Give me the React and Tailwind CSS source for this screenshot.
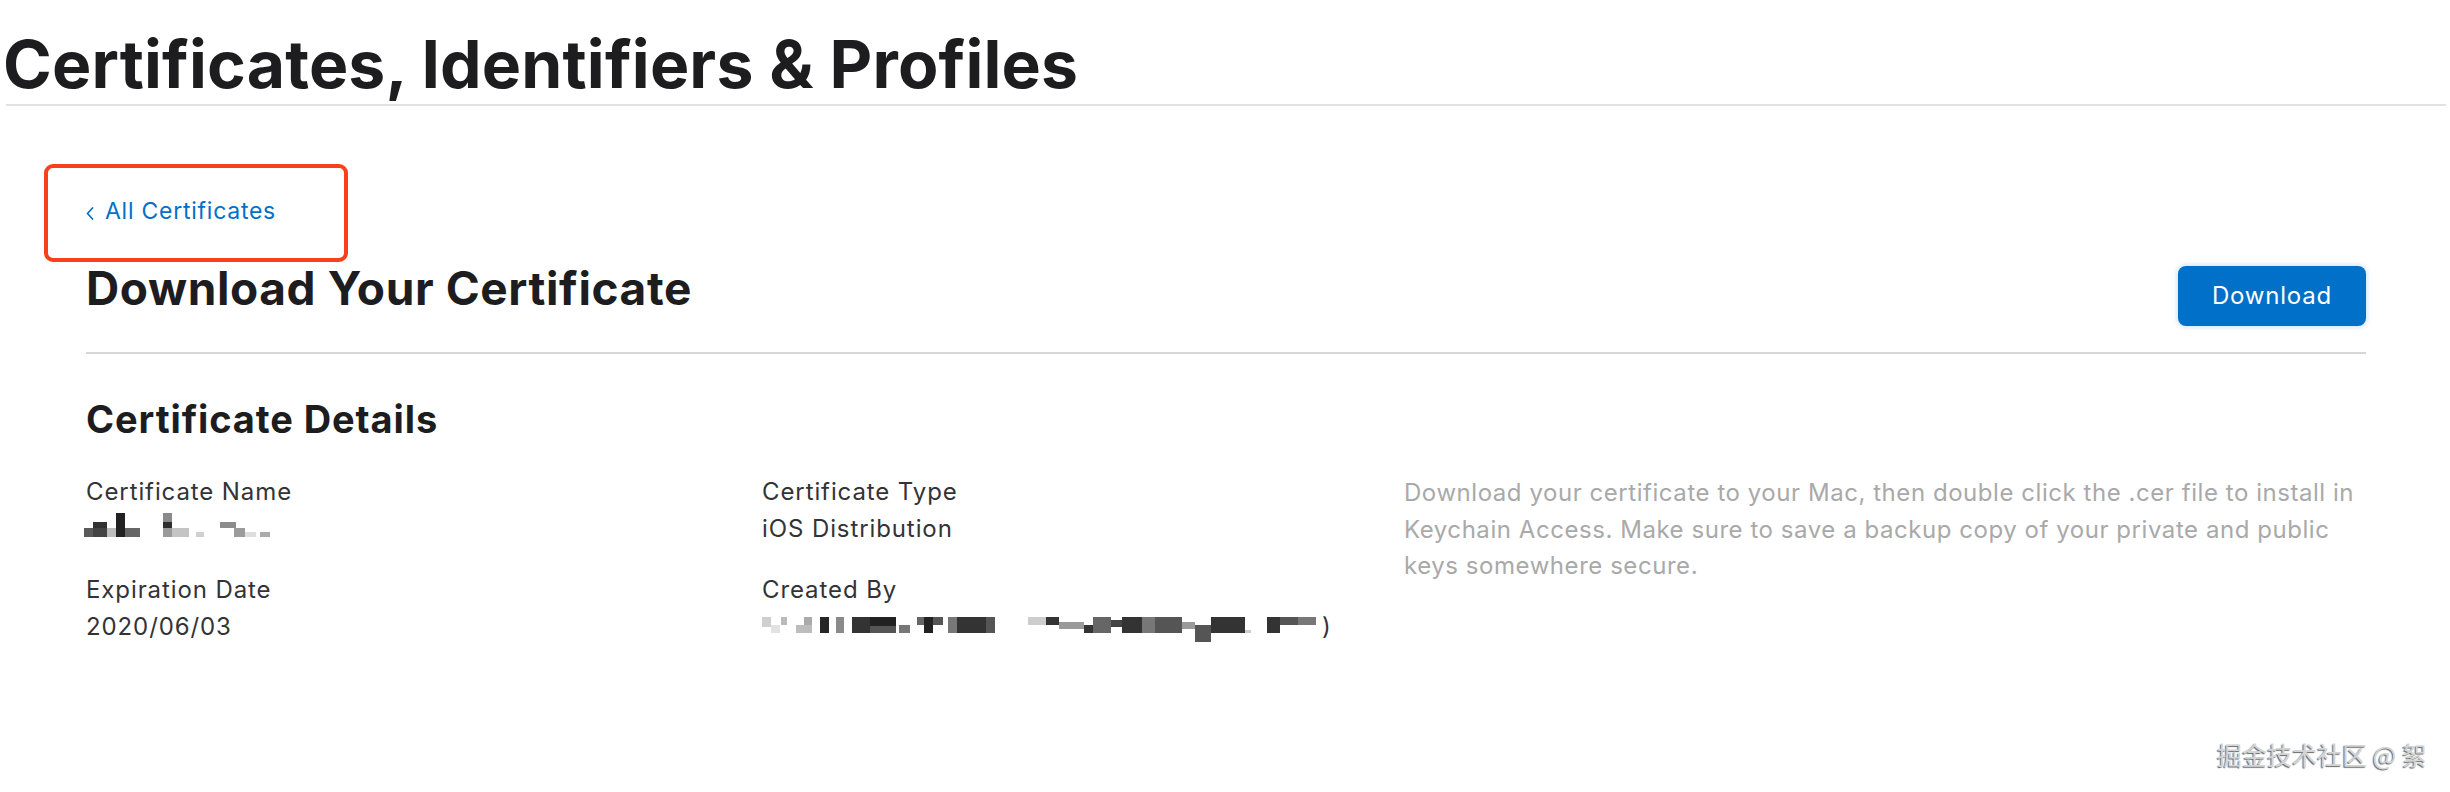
import React from "react";

const nameCells = [
  [0, 15, 9, 9, "#5a5a5a"],
  [9, 9, 14, 6, "#333"],
  [9, 15, 14, 9, "#444"],
  [23, 15, 9, 9, "#bdbdbd"],
  [32, 0, 9, 24, "#222"],
  [41, 15, 15, 9, "#666"],
  [79, 0, 9, 9, "#8a8a8a"],
  [79, 9, 9, 6, "#2e2e2e"],
  [79, 15, 9, 9, "#9a9a9a"],
  [88, 15, 17, 9, "#c4c4c4"],
  [112, 19, 8, 5, "#d0d0d0"],
  [136, 9, 16, 6, "#8c8c8c"],
  [150, 15, 11, 9, "#9c9c9c"],
  [161, 19, 11, 5, "#dedede"],
  [176, 19, 10, 5, "#ababab"],
];

const createdCells = [
  [0, 0, 9, 10, "#cfcfcf"],
  [9, 8, 9, 8, "#e2e2e2"],
  [19, 0, 6, 8, "#bbb"],
  [34, 8, 16, 8, "#bdbdbd"],
  [42, 0, 8, 8, "#aaa"],
  [58, 0, 9, 16, "#262626"],
  [74, 0, 8, 16, "#8a8a8a"],
  [90, 0, 18, 16, "#333"],
  [108, 0, 26, 9, "#222"],
  [108, 9, 26, 7, "#555"],
  [137, 8, 11, 8, "#777"],
  [155, 0, 7, 8, "#666"],
  [162, 0, 9, 16, "#222"],
  [171, 0, 10, 8, "#555"],
  [186, 0, 9, 16, "#777"],
  [195, 0, 29, 16, "#333"],
  [224, 0, 9, 16, "#555"],
  [266, 0, 18, 8, "#cdcdcd"],
  [284, 0, 13, 8, "#333"],
  [297, 5, 25, 7, "#9a9a9a"],
  [322, 8, 9, 8, "#333"],
  [331, 0, 18, 16, "#666"],
  [349, 3, 11, 7, "#444"],
  [360, 0, 20, 16, "#333"],
  [380, 0, 13, 16, "#777"],
  [393, 0, 27, 16, "#555"],
  [420, 5, 13, 7, "#9a9a9a"],
  [433, 8, 16, 17, "#555"],
  [449, 0, 34, 16, "#333"],
  [483, 13, 6, 3, "#ccc"],
  [505, 0, 13, 16, "#333"],
  [518, 0, 18, 8, "#555"],
  [536, 0, 18, 8, "#777"],
];

function Mosaic({ cells, w, h }) {
  return (
    <svg width={w} height={h} viewBox={`0 0 ${w} ${h}`} className="block">
      {cells.map(([x, y, cw, ch, c], i) => (
        <rect key={i} x={x} y={y} width={cw} height={ch} fill={c} />
      ))}
    </svg>
  );
}

export default function App() {
  return (
    <div className="relative w-[2450px] h-[792px] overflow-hidden bg-white [font-family:Inter,sans-serif] text-[#333336]">
      <header>
        <h1 className="pt-[31px] pl-[3px] text-[66px] leading-[66px] font-bold text-[#1d1d1f] tracking-[0.15px] whitespace-nowrap">
          Certificates, Identifiers &amp; Profiles
        </h1>
        <div className="mt-[7px] ml-[6px] mr-[4px] h-[2px] bg-[#e2e2e2]" />
      </header>

      <main className="ml-[86px] w-[2280px]">
        <a className="mt-[91px] flex h-[28px] items-center text-[#0070c9] text-[23px] leading-[28px] tracking-[0.75px]">
          <svg width="8" height="13" viewBox="0 0 8 13" className="mt-[4px] shrink-0">
            <polyline points="6.5,1 1.5,6.5 6.5,12" fill="none" stroke="#0070c9" strokeWidth="1.7" strokeLinecap="round" strokeLinejoin="round" />
          </svg>
          <span className="ml-[11px]">All Certificates</span>
        </a>

        <div className="mt-[41px] flex items-start justify-between">
          <h2 className="-mt-[1px] text-[46px] leading-[46px] font-bold text-[#1d1d1f] tracking-[0.6px] whitespace-nowrap">
            Download Your Certificate
          </h2>
          <button className="flex h-[60px] w-[188px] items-center justify-center rounded-[8px] bg-[#0070c9] text-[24px] tracking-[0.8px] text-white shadow-[0_0_6px_rgba(0,112,201,0.28)]">
            Download
          </button>
        </div>

        <div className="mt-[26px] h-[2px] bg-[#d6d6d6]" />

        <h3 className="mt-[46px] text-[38px] leading-[38px] font-bold text-[#1d1d1f] tracking-[0.9px]">
          Certificate Details
        </h3>

        <div className="mt-[35px] grid grid-cols-[676px_642px_1fr] text-[24px] leading-[37px]">
          <div className="tracking-[0.9px]">
            <div>Certificate Name</div>
            <div className="flex h-[37px] items-start pt-[3px] -ml-[2px]">
              <Mosaic cells={nameCells} w={190} h={24} />
            </div>
            <div className="mt-[24px]">Expiration Date</div>
            <div>2020/06/03</div>
          </div>
          <div className="tracking-[0.9px]">
            <div>Certificate Type</div>
            <div>iOS Distribution</div>
            <div className="mt-[24px]">Created By</div>
            <div className="flex h-[37px] items-start">
              <div className="pt-[9px]">
                <Mosaic cells={createdCells} w={556} h={25} />
              </div>
              <span className="ml-[4px]">)</span>
            </div>
          </div>
          <p className="mt-[2px] leading-[36.5px] tracking-[0.55px] text-[#a9a9a9] whitespace-nowrap">
            Download your certificate to your Mac, then double click the .cer file to install in
            <br />
            Keychain Access. Make sure to save a backup copy of your private and public
            <br />
            keys somewhere secure.
          </p>
        </div>
      </main>

      <div className="pointer-events-none absolute left-[44px] top-[164px] h-[98px] w-[304px] rounded-[9px] border-[4px] border-[#f8411c]" />

      <div className="absolute left-[2217px] top-[740px] text-[25px] leading-[28px] text-[#d4d4d4] [font-family:'Noto_Sans_CJK_SC',sans-serif] [text-shadow:-1px_1px_1px_#666]">
        掘金技术社区 @ 絮
      </div>
    </div>
  );
}
